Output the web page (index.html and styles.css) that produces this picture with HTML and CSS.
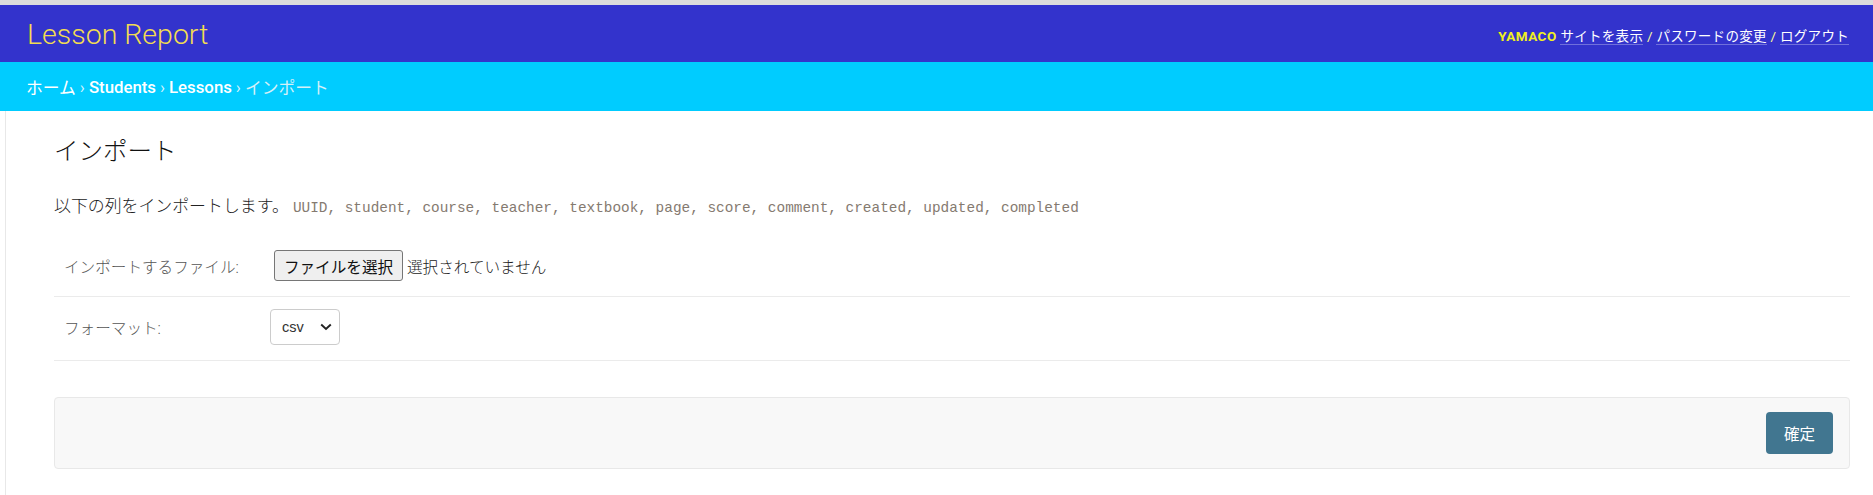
FILE: index.html
```html
<!DOCTYPE html>
<html lang="ja">
<head>
<meta charset="utf-8">
<title>インポート | Lesson Report</title>
<link rel="stylesheet" href="styles.css">
</head>
<body>
<div class="topline"></div>
<header class="header">
  <div class="branding">Lesson Report</div>
  <div class="user-tools">
    <strong class="user">YAMACO</strong>
    <a href="#" class="utlink">サイトを表示</a> <span class="sep">/</span>
    <a href="#" class="utlink">パスワードの変更</a> <span class="sep">/</span>
    <a href="#" class="utlink">ログアウト</a>
  </div>
</header>
<nav class="breadcrumbs">
  <a href="#" class="home">ホーム</a><span class="bsep">›</span><a href="#">Students</a><span class="bsep">›</span><a href="#">Lessons</a><span class="bsep">›</span><span class="current">インポート</span>
</nav>
<div class="main">
  <div class="content">
    <h1 class="title">インポート</h1>
    <p class="intro">以下の列をインポートします。 <code class="cols">UUID, student, course, teacher, textbook, page, score, comment, created, updated, completed</code></p>
    <form class="form">
      <div class="rows">
        <div class="form-row">
          <label class="label">インポートするファイル:</label>
          <div class="file">
            <button type="button" class="file-btn">ファイルを選択</button>
            <span class="file-name">選択されていません</span>
          </div>
        </div>
        <div class="form-row row2">
          <label class="label">フォーマット:</label>
          <div class="select">
            <select class="select-el"><option>csv</option></select>
            <svg class="chev" width="12" height="8" viewBox="0 0 12 8"><path d="M1.2 1.5 L6 6 L10.8 1.5" fill="none" stroke="#222" stroke-width="1.9"/></svg>
          </div>
        </div>
      </div>
      <div class="submit-row">
        <button type="button" class="submit">確定</button>
      </div>
    </form>
  </div>
</div>
</body>
</html>
```
FILE: styles.css
```css
html, body {
  margin: 0;
  padding: 0;
  background: #fff;
}
body {
  font-family: Roboto, "Noto Sans CJK JP", sans-serif;
  color: #333;
  height: 495px;
  overflow: hidden;
  display: flex;
  flex-direction: column;
}
.topline {
  height: 5px;
  background: #dcdcdc;
  flex: none;
}
.header {
  flex: none;
  height: 57px;
  background: #3333cc;
  display: flex;
  align-items: center;
  justify-content: space-between;
  padding: 0 24px 0 27px;
}
.branding {
  color: #f2dc52;
  font-size: 28.5px;
  font-weight: 300;
  margin-top: 2px;
}
.user-tools {
  color: #ffff88;
  font-size: 13.5px;
  letter-spacing: 0.3px;
  margin-top: 3px;
}
.user {
  color: #f0f020;
  font-weight: 700;
  letter-spacing: 0.5px;
}
.utlink {
  color: #fff;
  text-decoration: none;
  border-bottom: 1px solid rgba(255,255,255,0.3);
}
.sep {
  color: #ffff99;
}
.breadcrumbs {
  flex: none;
  height: 49px;
  background: #00ccff;
  display: flex;
  align-items: center;
  padding-left: 26px;
  font-size: 16.8px;
  color: #c8eefb;
}
.breadcrumbs a {
  color: #fff;
  text-decoration: none;
  font-weight: 500;
}
.breadcrumbs a.home {
  font-weight: 400;
}
.bsep {
  margin: 0 4px;
  color: #d6f3fc;
}
.current {
  color: #d4f0f8;
}
.main {
  flex: 1;
  margin-left: 5px;
  border-left: 1px solid #e8e8e8;
}
.content {
  padding: 26px 23px 0 48px;
}
.title {
  margin: 0;
  font-size: 24.5px;
  font-weight: 300;
  line-height: 30px;
  color: #111;
}
.intro {
  margin: 29px 0 0;
  font-size: 16.9px;
  font-weight: 300;
  line-height: 21px;
  color: #222;
}
.cols {
  font-family: "Liberation Mono", monospace;
  font-size: 14.4px;
  font-weight: 400;
  color: #857a70;
}
.form {
  margin: 18px 0 0;
}
.form-row {
  display: flex;
  align-items: center;
  padding: 13px 12px 15px 10px;
  border-bottom: 1px solid #ebebeb;
}
.row2 {
  padding-top: 12px;
}
.label {
  width: 210px;
  flex: none;
  font-size: 15.6px;
  font-weight: 300;
  color: #555;
}
.file {
  display: flex;
  align-items: center;
}
.file-btn {
  height: 31px;
  width: 129px;
  padding: 0;
  font-family: "Noto Sans CJK JP", sans-serif;
  font-size: 15.6px;
  color: #111;
  background: #efefef;
  border: 1px solid #767676;
  border-radius: 3px;
}
.file-name {
  margin-left: 4px;
  font-size: 15.6px;
  font-weight: 300;
  color: #222;
}
.select {
  margin-left: -4px;
  width: 68px;
  height: 34px;
  border: 1px solid #ccc;
  border-radius: 4px;
  display: flex;
  align-items: center;
  background: #fff;
}
.select-el {
  appearance: none;
  -webkit-appearance: none;
  border: none;
  background: transparent;
  font-family: "Liberation Sans", Arial, sans-serif;
  font-size: 14.5px;
  color: #333;
  padding: 0 0 0 11px;
  width: 39px;
  outline: none;
}
.chev {
  margin-left: 10px;
}
.submit-row {
  margin-top: 36px;
  height: 70px;
  border: 1px solid #e8e8e8;
  border-radius: 4px;
  background: #f8f8f8;
  display: flex;
  align-items: center;
  justify-content: flex-end;
  padding-right: 16px;
}
.submit {
  height: 42px;
  width: 67px;
  padding: 0;
  border: none;
  border-radius: 4px;
  background: #417690;
  color: #fff;
  font-family: "Noto Sans CJK JP", sans-serif;
  font-size: 15.5px;
}
```
